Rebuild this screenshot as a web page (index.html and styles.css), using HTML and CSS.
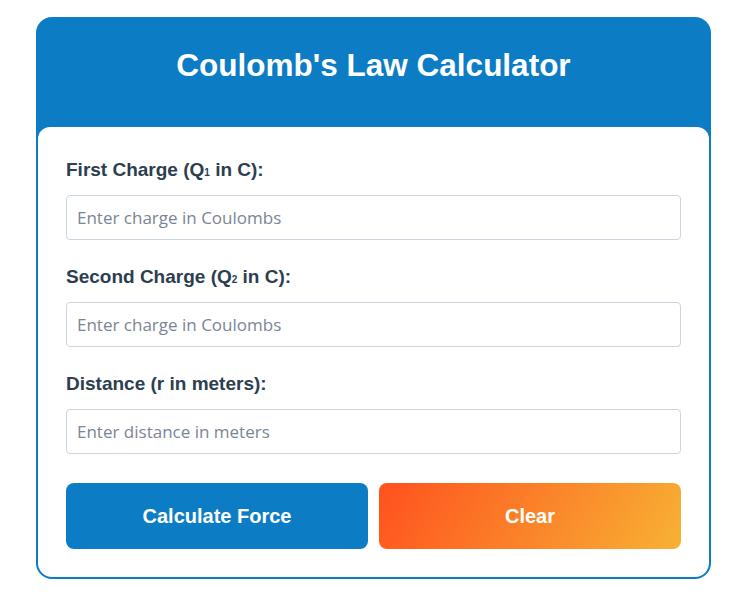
FILE: index.html
```html
<!DOCTYPE html>
<html lang="en">
  <head>
    <meta charset="UTF-8" />
    <meta name="viewport" content="width=device-width, initial-scale=1.0" />
    <title>Coulomb's Law Calculator</title>
    <link rel="stylesheet" href="styles.css">
  </head>
  <body>
    <div class="card">
      <h1>Coulomb's Law Calculator</h1>
      <div class="form">
        <div class="field">
          <label for="q1">First Charge (Q<sub>1</sub> in C):</label>
          <input id="q1" type="text" placeholder="Enter charge in Coulombs" />
        </div>
        <div class="field">
          <label for="q2">Second Charge (Q<sub>2</sub> in C):</label>
          <input id="q2" type="text" placeholder="Enter charge in Coulombs" />
        </div>
        <div class="field">
          <label for="r">Distance (r in meters):</label>
          <input id="r" type="text" placeholder="Enter distance in meters" />
        </div>
        <div class="buttons">
          <button class="btn btn-calc">Calculate Force</button>
          <button class="btn btn-clear">Clear</button>
        </div>
      </div>
    </div>
  </body>
</html>
```

FILE: styles.css
```css
body {
  font-family: "Liberation Sans", Arial, sans-serif;
  background-color: white;
  margin: 0;
  padding: 17px 0 0;
}

.card {
  width: 671px;
  margin: 0 auto;
  background-color: #0c7dc4;
  border: 2px solid #0c7dc4;
  border-radius: 16px;
  overflow: hidden;
}

h1 {
  margin: 0;
  height: 108px;
  line-height: 92px;
  text-align: center;
  color: white;
  font-size: 31.5px;
  font-weight: bold;
}

.form {
  background-color: white;
  border-radius: 12px 12px 0 0;
  padding: 32px 28px 28px;
}

.field {
  margin-bottom: 26px;
}

label {
  display: block;
  font-size: 19px;
  font-weight: bold;
  line-height: 21px;
  color: #2c3e50;
  margin-bottom: 15px;
}

sub {
  font-size: 10px;
  line-height: 0;
  vertical-align: baseline;
}

input {
  display: block;
  box-sizing: border-box;
  width: 100%;
  height: 45px;
  padding: 0 10px;
  border: 1px solid #cbd5e0;
  border-radius: 4px;
  font-family: "Open Sans", "Noto Sans", sans-serif;
  font-size: 17px;
  color: #2c3e50;
}

input::placeholder {
  color: #7b8594;
}

.buttons {
  display: flex;
  gap: 11px;
  padding-top: 3px;
}

.btn {
  flex: 1;
  height: 66px;
  border: none;
  border-radius: 8px;
  color: white;
  font-family: "Liberation Sans", Arial, sans-serif;
  font-size: 20px;
  font-weight: bold;
  cursor: pointer;
}

.btn-calc {
  background-color: #0c7dc4;
}

.btn-clear {
  background: linear-gradient(120deg, #ff511e, #f7b234);
}
```
